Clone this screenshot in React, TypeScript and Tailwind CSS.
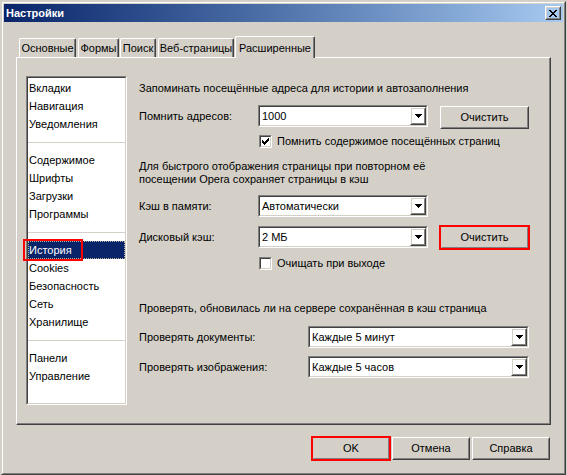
import React from 'react';

const font = "font-['Liberation_Sans',Arial,sans-serif] text-[11px] text-black";

const groups: string[][] = [
  ['Вкладки', 'Навигация', 'Уведомления'],
  ['Содержимое', 'Шрифты', 'Загрузки', 'Программы'],
  ['История', 'Cookies', 'Безопасность', 'Сеть', 'Хранилище'],
  ['Панели', 'Управление'],
];

const tabs = [
  { label: 'Основные', w: 'w-[57px]', ml: 'ml-[3px]' },
  { label: 'Формы', w: 'w-[41px]', ml: 'ml-[2px]' },
  { label: 'Поиск', w: 'w-[36px]', ml: 'ml-[1px]' },
  { label: 'Веб-страницы', w: 'w-[76px]', ml: 'ml-[2px]' },
];

// classic raised 3d frame
const Raised = ({ className = '', inner = '', children }: { className?: string; inner?: string; children?: React.ReactNode }) => (
  <div className={`border border-t-white border-l-white border-r-[#404040] border-b-[#404040] ${className}`}>
    <div className={`h-full border border-t-[#d4d0c8] border-l-[#d4d0c8] border-r-[#808080] border-b-[#808080] ${inner}`}>
      {children}
    </div>
  </div>
);

const Sunken = ({ className = '', inner = '', children }: { className?: string; inner?: string; children?: React.ReactNode }) => (
  <div className={`border border-t-[#808080] border-l-[#808080] border-r-white border-b-white ${className}`}>
    <div className={`h-full border border-t-[#404040] border-l-[#404040] border-r-[#d4d0c8] border-b-[#d4d0c8] ${inner}`}>
      {children}
    </div>
  </div>
);

const Button = ({ label, w, red }: { label: string; w: string; red?: boolean }) => (
  <Raised
    className={`${w} h-[23px] shrink-0 ${red ? 'outline-2 outline-[#ff0000] -outline-offset-1' : ''}`}
    inner="flex items-center justify-center"
  >
    {label}
  </Raised>
);

const Arrow = () => (
  <svg width="7" height="4" viewBox="0 0 7 4" shapeRendering="crispEdges">
    <rect x="0" y="0" width="7" height="1" fill="#000" />
    <rect x="1" y="1" width="5" height="1" fill="#000" />
    <rect x="2" y="2" width="3" height="1" fill="#000" />
    <rect x="3" y="3" width="1" height="1" fill="#000" />
  </svg>
);

const Combo = ({ value, w }: { value: string; w: string }) => (
  <Sunken className={`${w} h-[22px] shrink-0`} inner="bg-white flex items-stretch">
    <span className="flex-1 pl-[2px] leading-[18px]">{value}</span>
    <Raised className="w-[16px]" inner="flex items-center justify-center">
      <Arrow />
    </Raised>
  </Sunken>
);

const Check = () => (
  <svg width="7" height="7" viewBox="0 0 7 7" shapeRendering="crispEdges">
    <rect x="6" y="0" width="1" height="1" fill="#000" />
    <rect x="5" y="1" width="2" height="1" fill="#000" />
    <rect x="0" y="2" width="1" height="1" fill="#000" />
    <rect x="4" y="2" width="3" height="1" fill="#000" />
    <rect x="0" y="3" width="2" height="1" fill="#000" />
    <rect x="3" y="3" width="3" height="1" fill="#000" />
    <rect x="0" y="4" width="5" height="1" fill="#000" />
    <rect x="1" y="5" width="3" height="1" fill="#000" />
    <rect x="2" y="6" width="1" height="1" fill="#000" />
  </svg>
);

const CheckRow = ({ label, checked }: { label: string; checked?: boolean }) => (
  <div className="flex items-center h-[13px] pl-[120px]">
    <Sunken className="w-[13px] h-[13px] shrink-0" inner="bg-white flex items-center justify-center">
      {checked && <Check />}
    </Sunken>
    <span className="ml-[5px] leading-[13px]">{label}</span>
  </div>
);

const CloseX = () => (
  <svg width="8" height="7" viewBox="0 0 8 7" shapeRendering="crispEdges">
    <rect x="0" y="0" width="2" height="1" fill="#000" />
    <rect x="6" y="0" width="2" height="1" fill="#000" />
    <rect x="1" y="1" width="2" height="1" fill="#000" />
    <rect x="5" y="1" width="2" height="1" fill="#000" />
    <rect x="2" y="2" width="4" height="1" fill="#000" />
    <rect x="3" y="3" width="2" height="1" fill="#000" />
    <rect x="2" y="4" width="4" height="1" fill="#000" />
    <rect x="1" y="5" width="2" height="1" fill="#000" />
    <rect x="5" y="5" width="2" height="1" fill="#000" />
    <rect x="0" y="6" width="2" height="1" fill="#000" />
    <rect x="6" y="6" width="2" height="1" fill="#000" />
  </svg>
);

const Separator = () => (
  <div className="h-[18px] flex items-center">
    <div className="h-px w-full bg-[#d4d0c8]" />
  </div>
);

const App: React.FC = () => {
  return (
    <div className={`w-[567px] h-[475px] bg-[#d4d0c8] pl-[1px] pt-[1px] overflow-hidden ${font}`}>
      <div className="w-[565px] h-[474px] border border-t-[#d4d0c8] border-l-[#d4d0c8] border-r-[#404040] border-b-[#404040]">
        <div className="h-full border border-t-white border-l-white border-r-[#808080] border-b-[#808080] p-[1px] flex flex-col">
          {/* title bar */}
          <div className="h-[18px] shrink-0 bg-linear-to-r from-[#0a246a] to-[#a6caf0] flex items-center pl-[2px] pr-[2px]">
            <span className="flex-1 font-bold text-white leading-[18px]">Настройки</span>
            <Raised className="w-[16px] h-[14px]" inner="flex items-center justify-center">
              <CloseX />
            </Raised>
          </div>

          <div className="flex-1 px-[12px] flex flex-col">
            {/* tabs */}
            <div className="mt-[14px] h-[21px] flex items-end">
              {tabs.map((t) => (
                <div
                  key={t.label}
                  className={`${t.w} ${t.ml} h-[19px] border-l border-t border-r border-l-white border-t-white border-r-[#404040] rounded-t-[2px] flex items-center justify-center shadow-[inset_-1px_0_0_#808080]`}
                >
                  {t.label}
                </div>
              ))}
              <div className="w-[80px] ml-[1px] h-[22px] -mb-px relative z-10 bg-[#d4d0c8] border-l border-t border-r border-l-white border-t-white border-r-[#404040] rounded-t-[2px] flex items-start justify-center pt-[3px] shadow-[inset_-1px_0_0_#808080]">
                Расширенные
              </div>
            </div>

            {/* panel */}
            <div className="w-[535px] h-[368px] border border-t-white border-l-white border-r-[#404040] border-b-[#404040]">
              <div className="h-full border-r border-b border-r-[#808080] border-b-[#808080] flex items-start pl-[9px] pt-[18px]">
                {/* list */}
                <Sunken className="w-[101px] h-[329px] shrink-0" inner="bg-white pt-px">
                  {groups.map((g, gi) => (
                    <div key={gi}>
                      {gi > 0 && <Separator />}
                      {g.map((item) =>
                        item === 'История' ? (
                          <div
                            key={item}
                            className="relative h-[18px] leading-[18px] pl-px bg-[#0a246a] text-white outline-1 outline-dotted outline-[#b8b8a0] -outline-offset-1"
                          >
                            {item}
                            <div className="absolute -left-[5px] -top-[2px] w-[60px] h-[22px] border-2 border-[#ff0000]" />
                          </div>
                        ) : (
                          <div key={item} className="h-[18px] leading-[18px] pl-px">
                            {item}
                          </div>
                        ),
                      )}
                    </div>
                  ))}
                </Sunken>

                {/* settings */}
                <div className="ml-[12px] mt-[6px] flex flex-col">
                  <div className="leading-[13px]">Запоминать посещённые адреса для истории и автозаполнения</div>

                  <div className="mt-[10px] flex items-start">
                    <span className="w-[119px] leading-[22px]">Помнить адресов:</span>
                    <Combo value="1000" w="w-[170px]" />
                    <div className="ml-[12px] mt-px">
                      <Button label="Очистить" w="w-[89px]" />
                    </div>
                  </div>

                  <div className="mt-[6px]">
                    <CheckRow label="Помнить содержимое посещённых страниц" checked />
                  </div>

                  <div className="mt-[12px] leading-[13px]">
                    Для быстрого отображения страницы при повторном её
                    <br />
                    посещении Opera сохраняет страницы в кэш
                  </div>

                  <div className="mt-[9px] flex items-start">
                    <span className="w-[119px] leading-[22px]">Кэш в памяти:</span>
                    <Combo value="Автоматически" w="w-[170px]" />
                  </div>

                  <div className="mt-[9px] flex items-start">
                    <span className="w-[119px] leading-[22px]">Дисковый кэш:</span>
                    <Combo value="2 МБ" w="w-[170px]" />
                    <div className="ml-[12px]">
                      <Button label="Очистить" w="w-[89px]" red />
                    </div>
                  </div>

                  <div className="mt-[8px]">
                    <CheckRow label="Очищать при выходе" />
                  </div>

                  <div className="mt-[32px] leading-[13px]">
                    Проверять, обновилась ли на сервере сохранённая в кэш страница
                  </div>

                  <div className="mt-[11px] flex items-start">
                    <span className="w-[169px] leading-[22px]">Проверять документы:</span>
                    <Combo value="Каждые 5 минут" w="w-[221px]" />
                  </div>

                  <div className="mt-[8px] flex items-start">
                    <span className="w-[169px] leading-[22px]">Проверять изображения:</span>
                    <Combo value="Каждые 5 часов" w="w-[221px]" />
                  </div>
                </div>
              </div>
            </div>

            {/* dialog buttons */}
            <div className="mt-[12px] flex justify-end gap-[2px] pr-px">
              <Button label="OK" w="w-[78px]" red />
              <Button label="Отмена" w="w-[78px]" />
              <Button label="Справка" w="w-[78px]" />
            </div>
          </div>
        </div>
      </div>
    </div>
  );
};

export default App;
